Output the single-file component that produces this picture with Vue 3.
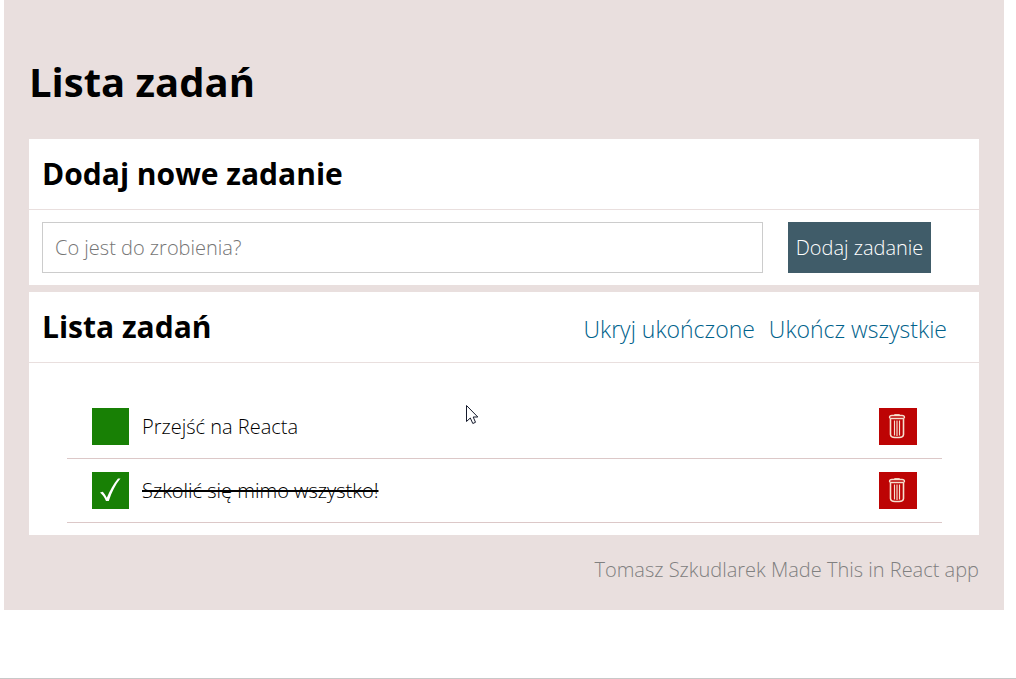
<script setup>
import { ref, computed } from 'vue'

const tasks = ref([
  { id: 1, content: 'Przejść na Reacta', done: false },
  { id: 2, content: 'Szkolić się mimo wszystko!', done: true },
])
const draft = ref('')
const hideDone = ref(false)

const visibleTasks = computed(() =>
  hideDone.value ? tasks.value.filter((task) => !task.done) : tasks.value
)

function addTask() {
  const content = draft.value.trim()
  if (!content) return
  tasks.value.push({ id: Date.now(), content, done: false })
  draft.value = ''
}
function removeTask(id) {
  tasks.value = tasks.value.filter((task) => task.id !== id)
}
function finishAll() {
  tasks.value.forEach((task) => (task.done = true))
}
</script>

<template>
  <div class="page">
    <main class="container">
      <h1 class="title">Lista zadań</h1>

      <section class="card">
        <header class="card-header">
          <h2 class="card-title">Dodaj nowe zadanie</h2>
        </header>
        <form class="form" @submit.prevent="addTask">
          <input v-model="draft" class="field" type="text" placeholder="Co jest do zrobienia?" aria-label="Co jest do zrobienia?" />
          <button class="add" type="submit">Dodaj zadanie</button>
        </form>
      </section>

      <section class="card">
        <header class="card-header">
          <h2 class="card-title">Lista zadań</h2>
          <div class="actions">
            <button class="action" type="button" @click="hideDone = !hideDone">Ukryj ukończone</button>
            <button class="action" type="button" @click="finishAll">Ukończ wszystkie</button>
          </div>
        </header>
        <ul class="tasks">
          <li v-for="task in visibleTasks" :key="task.id" class="task">
            <span class="toggle">
              <input :id="'task-' + task.id" v-model="task.done" class="check" type="checkbox" />
              <svg v-if="task.done" class="tick" width="37" height="37" viewBox="0 0 37 37" aria-hidden="true">
                <path d="M8 20.6 L10.8 19.7 C12.4 21.4 13.6 23.4 14.8 25.7 C17.8 18.7 21.5 12 26 6.6 L28.5 6.6 C23.4 12.8 19.7 20 16.8 29 L14 29 C12.3 25.4 10.5 22.6 8 20.6 Z" fill="#fff" />
              </svg>
            </span>
            <label :for="'task-' + task.id" class="content" :class="{ done: task.done }">{{ task.content }}</label>
            <button class="remove" type="button" aria-label="Usuń zadanie" @click="removeTask(task.id)">
              <svg width="20" height="25" viewBox="0 0 20 25" fill="none" stroke="#f6e0cf" aria-hidden="true">
                <path d="M6 1 Q9 -0.5 12 1" />
                <path d="M4 1.5 H14 Q16.5 1.7 16.5 3.2 Q16.5 4.5 14 4.5 H4 Q1.5 4.5 1.5 3.2 Q1.5 1.7 4 1.5 Z" stroke-width="1.3" />
                <path d="M2.5 5 V20.5 Q2.7 23.5 7 23.5 H11 Q15.3 23.5 15.5 20.5 V5" stroke-width="1.6" />
                <path d="M6.5 6.5 V21.5 M9 6.5 V22 M11.5 6.5 V21.5" stroke-width="1.2" />
              </svg>
            </button>
          </li>
        </ul>
      </section>

      <footer class="footer">Tomasz Szkudlarek Made This in React app</footer>
    </main>

    <svg class="pointer" width="14" height="21" viewBox="0 0 14 21" aria-hidden="true">
      <path d="M0.5 0.5 V16.5 L4.3 13 L6.8 18.5 L9.5 17.3 L7.2 12 H11.8 Z" fill="#fff" stroke="#151a2c" />
    </svg>
  </div>
</template>

<style>
body {
  margin: 0;
  background: #fff;
}
</style>

<style scoped>
.page {
  position: relative;
  box-sizing: border-box;
  min-height: 100vh;
  padding: 0 12px 0 4px;
  border-bottom: 1px solid #c8c8c8;
  font-family: "Open Sans", "Noto Sans", sans-serif;
  font-size: 20px;
  font-weight: 300;
  line-height: 28px;
  color: #000;
}
.container {
  padding: 54px 25px 26px;
  background: #e9dfde;
}
.title {
  margin: 0 0 30px;
  font-size: 40px;
  font-weight: 700;
  line-height: 55px;
}
.card {
  margin-bottom: 7px;
  background: #fff;
}
.card-header {
  display: flex;
  align-items: center;
  justify-content: space-between;
  height: 70px;
  padding: 0 32px 0 13px;
  border-bottom: 1px solid #e9dfde;
}
.card-title {
  margin: 0;
  font-size: 30px;
  font-weight: 700;
  line-height: 40px;
}
.form {
  display: flex;
  gap: 25px;
  padding: 12px 48px 12px 13px;
}
.field {
  box-sizing: border-box;
  flex: 1;
  min-width: 0;
  height: 51px;
  padding: 0 12px;
  border: 1px solid #ccc;
  border-radius: 0;
  background: #fff;
  font: inherit;
  color: #000;
}
.field::placeholder {
  color: #757575;
  opacity: 1;
}
.add {
  width: 143px;
  height: 51px;
  padding: 0;
  border: 0;
  background: #405c69;
  color: #fff;
  font: inherit;
}
.actions {
  display: flex;
  gap: 14px;
  padding-top: 4px;
}
.action {
  padding: 0;
  border: 0;
  background: none;
  color: #00628b;
  font: inherit;
  font-size: 23px;
  line-height: 32px;
}
.tasks {
  margin: 0;
  padding: 32px 37px 12px 38px;
  list-style: none;
}
.task {
  display: flex;
  align-items: center;
  padding: 13px 25px;
  border-bottom: 1px solid #dcc8c8;
}
.toggle {
  display: grid;
  width: 37px;
  height: 37px;
}
.check {
  grid-area: 1 / 1;
  appearance: none;
  width: 37px;
  height: 37px;
  margin: 0;
  background: #188005;
}
.tick {
  grid-area: 1 / 1;
  pointer-events: none;
}
.content {
  flex: 1;
  padding-left: 13px;
}
.done {
  text-decoration: line-through 2px;
}
.remove {
  display: grid;
  place-items: center;
  width: 38px;
  height: 37px;
  padding: 0;
  border: 0;
  background: #bd0404;
}
.footer {
  padding-top: 14px;
  color: #808080;
  text-align: right;
}
.pointer {
  position: absolute;
  top: 405px;
  left: 466px;
  pointer-events: none;
}
</style>
